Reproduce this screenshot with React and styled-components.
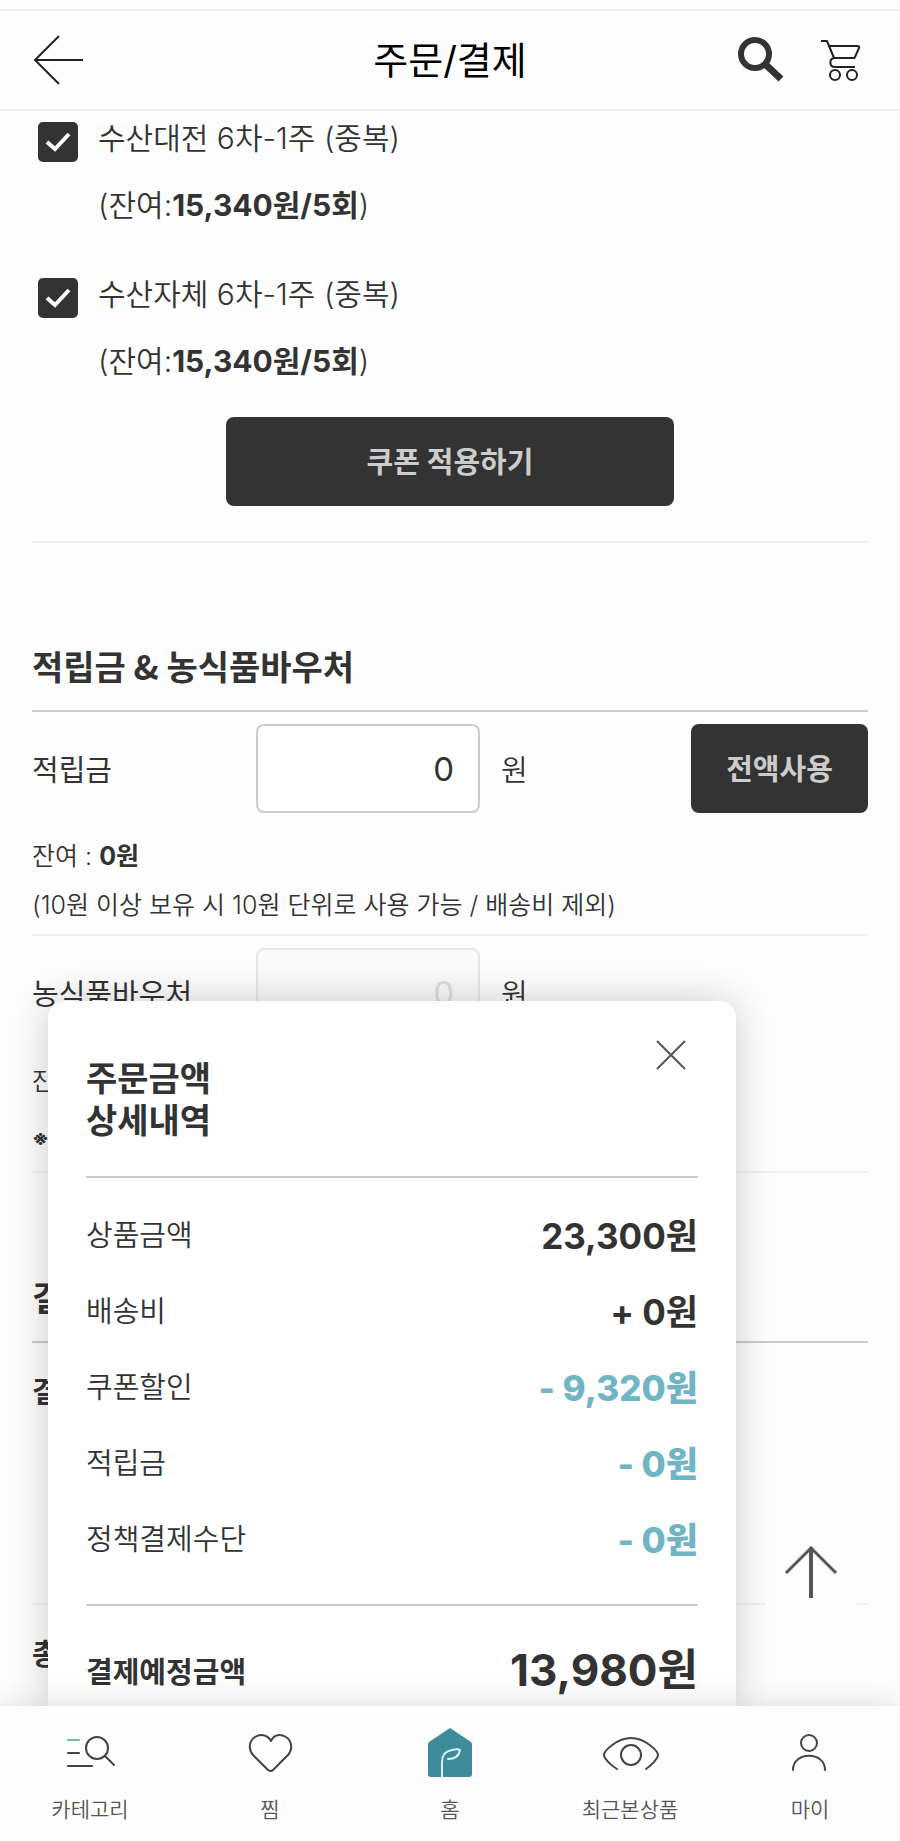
import React, { useState } from "react";
import styled, { createGlobalStyle } from "styled-components";

const GlobalStyle = createGlobalStyle`
  * {
    box-sizing: border-box;
  }

  body {
    margin: 0;
    background-color: #fdfdfd;
    color: #333;
    font-family: "Inter", "Noto Sans CJK KR", sans-serif;
    font-size: 29px;
  }

  button,
  input {
    font-family: inherit;
    font-size: inherit;
    color: inherit;
  }
`;

const Page = styled.div`
  display: flex;
  flex-direction: column;
  min-height: 100vh;
`;

const Header = styled.header`
  display: grid;
  grid-template-columns: 1fr auto 1fr;
  align-items: center;
  height: 102px;
  margin-top: 9px;
  padding: 0 32px;
  border-top: 2px solid #f0f0f0;
  border-bottom: 2px solid #f0f0f0;
`;

const PageTitle = styled.h1`
  margin: 0;
  padding-bottom: 6px;
  color: #000;
  font-size: 38px;
  font-weight: 400;
`;

const HeaderActions = styled.div`
  display: flex;
  align-items: center;
  justify-content: flex-end;
  gap: 34px;
`;

const IconButton = styled.button`
  display: flex;
  padding: 0;
  border: 0;
  background: none;
  justify-self: start;
  cursor: pointer;
`;

const Main = styled.main`
  position: relative;
  flex: 1;
  padding: 5px 32px 0;
  overflow: hidden;
`;

const CouponList = styled.ul`
  display: flex;
  flex-direction: column;
  gap: 45px;
  margin: 0;
  padding: 0 0 0 6px;
  list-style: none;
`;

const CouponLabel = styled.label`
  display: flex;
  gap: 20px;
  cursor: pointer;
`;

const Checkbox = styled.input`
  appearance: none;
  width: 40px;
  height: 40px;
  margin: 6px 0 0;
  border: 2px solid #333;
  border-radius: 5px;
  background-color: #fff;

  &:checked {
    background: #333
      url("data:image/svg+xml,%3Csvg xmlns='http://www.w3.org/2000/svg' viewBox='0 0 36 36'%3E%3Cpath d='M7 18l8 7 14-15' fill='none' stroke='%23fff' stroke-width='4'/%3E%3C/svg%3E")
      center / 100% no-repeat;
  }
`;

const CouponText = styled.span`
  display: flex;
  flex-direction: column;
  gap: 23px;
  font-size: 30px;
  line-height: 44px;
  font-weight: 350;
`;

const DarkButton = styled.button`
  height: 89px;
  padding: 0 0 4px;
  border: 0;
  border-radius: 8px;
  background-color: #333;
  color: #ccc;
  font-weight: 700;
  cursor: pointer;
`;

const ApplyButton = styled(DarkButton)`
  display: block;
  width: 448px;
  max-width: 100%;
  margin: 34px auto 35px;
`;

const Section = styled.section`
  padding-top: ${(props) => props.$top}px;
  border-top: 2px solid #f0f0f0;
`;

const SectionTitle = styled.h2`
  margin: 0;
  padding-bottom: 20px;
  border-bottom: 2px solid #ccc;
  font-family: "Noto Sans CJK KR", sans-serif;
  font-size: 34px;
  line-height: 48px;
  font-weight: 700;
`;

const PointRow = styled.div`
  display: grid;
  grid-template-columns: 224px 224px 1fr 177px;
  align-items: center;
  padding-top: 12px;
`;

const PointLabel = styled.label`
  padding-bottom: 2px;
  font-weight: 400;
`;

const PointInput = styled.input`
  width: 100%;
  height: 89px;
  padding: 0 24px;
  border: 2px solid #ccc;
  border-radius: 8px;
  background-color: #fff;
  font-size: 33px;
  text-align: right;

  &:disabled {
    border-color: #e6e6e6;
    background-color: #fafafa;
    color: #ddd;
  }
`;

const Unit = styled.span`
  padding: 0 0 2px 21px;
  font-weight: 350;
`;

const Notes = styled.div`
  padding: ${(props) => (props.$wide ? "16px 0 4px" : "19px 0 4px")};
  font-size: 25px;
  line-height: ${(props) => (props.$wide ? 56 : 49)}px;
  font-weight: 350;

  p {
    margin: 0;
  }
`;

const Strong = styled.strong`
  font-weight: 700;
`;

const NoteMark = styled(Strong)`
  font-size: 21px;
`;

const PaymentMethod = styled.h3`
  margin: 0;
  padding: 28px 0 188px;
  font-size: 29px;
  line-height: 44px;
  font-weight: 700;
`;

const GrandTotal = styled.div`
  padding-bottom: 20px;
  line-height: 44px;
  font-weight: 700;
`;

// floats over the order form, flush with the tab bar
const Sheet = styled.aside`
  position: absolute;
  left: 48px;
  right: 164px;
  bottom: 0;
  padding: 57px 38px 0;
  border-radius: 16px 16px 0 0;
  background-color: #fefefe;
  box-shadow: 0 0 40px rgba(0, 0, 0, 0.2);
`;

const SheetHead = styled.div`
  display: flex;
  align-items: flex-start;
  justify-content: space-between;
  padding-bottom: 34px;
  border-bottom: 2px solid #ccc;
`;

const SheetTitle = styled.h2`
  margin: 0;
  font-size: 34px;
  line-height: 42px;
  font-weight: 700;
`;

const CloseButton = styled(IconButton)`
  margin: -18px 12px 0 0;
`;

const PriceList = styled.dl`
  margin: 0;
  padding: 17px 0 29px;
  border-bottom: 2px solid #ccc;
`;

const PriceRow = styled.div`
  display: flex;
  align-items: center;
  justify-content: space-between;
  height: 76px;

  dt {
    font-weight: 350;
  }

  dd {
    margin: 0;
    color: ${(props) => (props.$discount ? "#6fb5c4" : "#333")};
    font-size: 35px;
    font-weight: ${(props) => (props.$discount ? 800 : 700)};
  }
`;

const TotalRow = styled.div`
  display: flex;
  align-items: center;
  justify-content: space-between;
  height: 100px;
  padding-top: 28px;
  font-weight: 700;

  strong {
    font-size: 44px;
    line-height: 56px;
    font-weight: 700;
  }
`;

const TopButton = styled.button`
  position: absolute;
  right: 44px;
  bottom: 89px;
  display: flex;
  align-items: center;
  justify-content: center;
  width: 90px;
  height: 90px;
  border: 0;
  background-color: #fdfdfd;
  cursor: pointer;
`;

const TabBar = styled.nav`
  position: relative;
  display: grid;
  grid-template-columns: repeat(5, 1fr);
  height: 135px;
  background-color: #fdfdfd;
  box-shadow: 0 0 30px rgba(0, 0, 0, 0.14);
`;

const Tab = styled.a`
  display: flex;
  flex-direction: column;
  align-items: center;
  gap: 15px;
  padding-top: 18px;
  color: #555;
  font-size: 21px;
  line-height: 30px;
  font-weight: 350;
  text-decoration: none;
`;

const TabIcon = styled.svg`
  width: 60px;
  height: 56px;
  fill: none;
  stroke: #444;
  stroke-width: 2;
  stroke-linecap: round;
  stroke-linejoin: round;
`;

const coupons = [
  { id: "c1", name: "수산대전 6차-1주 (중복)", remain: "15,340원/5회" },
  { id: "c2", name: "수산자체 6차-1주 (중복)", remain: "15,340원/5회" },
];

const prices = [
  { label: "상품금액", value: "23,300원" },
  { label: "배송비", value: "+ 0원" },
  { label: "쿠폰할인", value: "- 9,320원", discount: true },
  { label: "적립금", value: "- 0원", discount: true },
  { label: "정책결제수단", value: "- 0원", discount: true },
];

const tabs = [
  {
    label: "카테고리",
    icon: (
      <>
        <path d="M8 16h11" stroke="#6fb8b4" />
        <path d="M8 29h11M8 42h24M45 32l9 9" />
        <circle cx="37" cy="24" r="11" />
      </>
    ),
  },
  {
    label: "찜",
    icon: (
      <path d="M31 17C27 10 20 10 15 13C9 17 8 25 13 31L28 46Q31 48 33 46L48 31C53 25 52 17 46 13C41 10 34 10 31 17Z" />
    ),
  },
  {
    label: "홈",
    icon: (
      <>
        <path
          d="M30 4L51 18Q52 19 52 21V50Q52 53 49 53H11Q8 53 8 50V21Q8 19 9 18Z"
          fill="#3d8b9b"
          stroke="none"
        />
        <path
          d="M22 53V38C22 31 26 27 32 26C35 25 39 25 40 26C39 32 35 35 28 35"
          stroke="#d9f3f6"
        />
      </>
    ),
  },
  {
    label: "최근본상품",
    icon: (
      <>
        <path d="M17 45C10 41 4 34 4 31C4 27 17 14 31 14C45 14 58 27 58 31C58 34 52 41 46 45" />
        <circle cx="31" cy="31" r="10" />
      </>
    ),
  },
  {
    label: "마이",
    icon: (
      <>
        <circle cx="29" cy="19" r="8" />
        <path d="M13 46C13 27 45 27 45 46" />
      </>
    ),
  },
];

const App = () => {
  const [checked, setChecked] = useState({ c1: true, c2: true });
  const [point, setPoint] = useState("0");

  const toggle = (id) => setChecked({ ...checked, [id]: !checked[id] });

  return (
    <Page>
      <GlobalStyle />
      <Header>
        <IconButton aria-label="뒤로">
          <svg width="54" height="54" fill="none" stroke="#222" strokeWidth="2">
            <path d="M51 27H3M27 3L3 27L27 51" />
          </svg>
        </IconButton>
        <PageTitle>주문/결제</PageTitle>
        <HeaderActions>
          <IconButton aria-label="검색">
            <svg width="50" height="50" fill="none" stroke="#333">
              <circle cx="19" cy="19" r="14" strokeWidth="6" />
              <path d="M29 29L45 44" strokeWidth="7" />
            </svg>
          </IconButton>
          <IconButton aria-label="장바구니">
            <svg
              width="48"
              height="46"
              fill="none"
              stroke="#222"
              strokeWidth="2"
              strokeLinejoin="round"
            >
              <path d="M1 4H7L14 21H34Q35 21 35 20L39 11Q40 9 37 9H9M14 21C9 22 9 30 15 30H35" />
              <circle cx="15" cy="38" r="5" />
              <circle cx="32" cy="38" r="5" />
            </svg>
          </IconButton>
        </HeaderActions>
      </Header>

      <Main>
        <CouponList>
          {coupons.map((coupon) => (
            <li key={coupon.id}>
              <CouponLabel>
                <Checkbox
                  type="checkbox"
                  checked={checked[coupon.id]}
                  onChange={() => toggle(coupon.id)}
                />
                <CouponText>
                  <span>{coupon.name}</span>
                  <span>
                    (잔여:<Strong>{coupon.remain}</Strong>)
                  </span>
                </CouponText>
              </CouponLabel>
            </li>
          ))}
        </CouponList>
        <ApplyButton>쿠폰 적용하기</ApplyButton>

        <Section $top={99}>
          <SectionTitle>적립금 &amp; 농식품바우처</SectionTitle>
          <PointRow>
            <PointLabel htmlFor="point">적립금</PointLabel>
            <PointInput
              id="point"
              value={point}
              onChange={(e) => setPoint(e.target.value)}
            />
            <Unit>원</Unit>
            <DarkButton>전액사용</DarkButton>
          </PointRow>
          <Notes>
            <p>
              잔여 : <Strong>0원</Strong>
            </p>
            <p>(10원 이상 보유 시 10원 단위로 사용 가능 / 배송비 제외)</p>
          </Notes>
        </Section>

        <Section $top={0}>
          <PointRow>
            <PointLabel htmlFor="voucher">농식품바우처</PointLabel>
            <PointInput id="voucher" defaultValue="0" disabled />
            <Unit>원</Unit>
          </PointRow>
          <Notes $wide>
            <p>잔여</p>
            <p>
              <NoteMark>※</NoteMark>
            </p>
          </Notes>
        </Section>

        <Section $top={100}>
          <SectionTitle>결제수단</SectionTitle>
          <PaymentMethod>결제</PaymentMethod>
        </Section>

        <Section $top={28}>
          <GrandTotal>총</GrandTotal>
        </Section>

        <TopButton aria-label="맨 위로">
          <svg width="54" height="54" fill="none" stroke="#555">
            <path d="M27 2V53" strokeWidth="4" />
            <path d="M2 28L27 3L52 28" strokeWidth="3" />
          </svg>
        </TopButton>

        <Sheet aria-label="주문금액 상세내역">
          <SheetHead>
            <SheetTitle>
              주문금액
              <br />
              상세내역
            </SheetTitle>
            <CloseButton aria-label="닫기">
              <svg width="30" height="30" stroke="#555" strokeWidth="2">
                <path d="M1 1L29 29M29 1L1 29" />
              </svg>
            </CloseButton>
          </SheetHead>
          <PriceList>
            {prices.map((price) => (
              <PriceRow key={price.label} $discount={price.discount}>
                <dt>{price.label}</dt>
                <dd>{price.value}</dd>
              </PriceRow>
            ))}
          </PriceList>
          <TotalRow>
            <span>결제예정금액</span>
            <strong>13,980원</strong>
          </TotalRow>
        </Sheet>
      </Main>

      <TabBar>
        {tabs.map((tab) => (
          <Tab href="#" key={tab.label}>
            <TabIcon viewBox="0 0 60 56">{tab.icon}</TabIcon>
            {tab.label}
          </Tab>
        ))}
      </TabBar>
    </Page>
  );
};

export default App;
